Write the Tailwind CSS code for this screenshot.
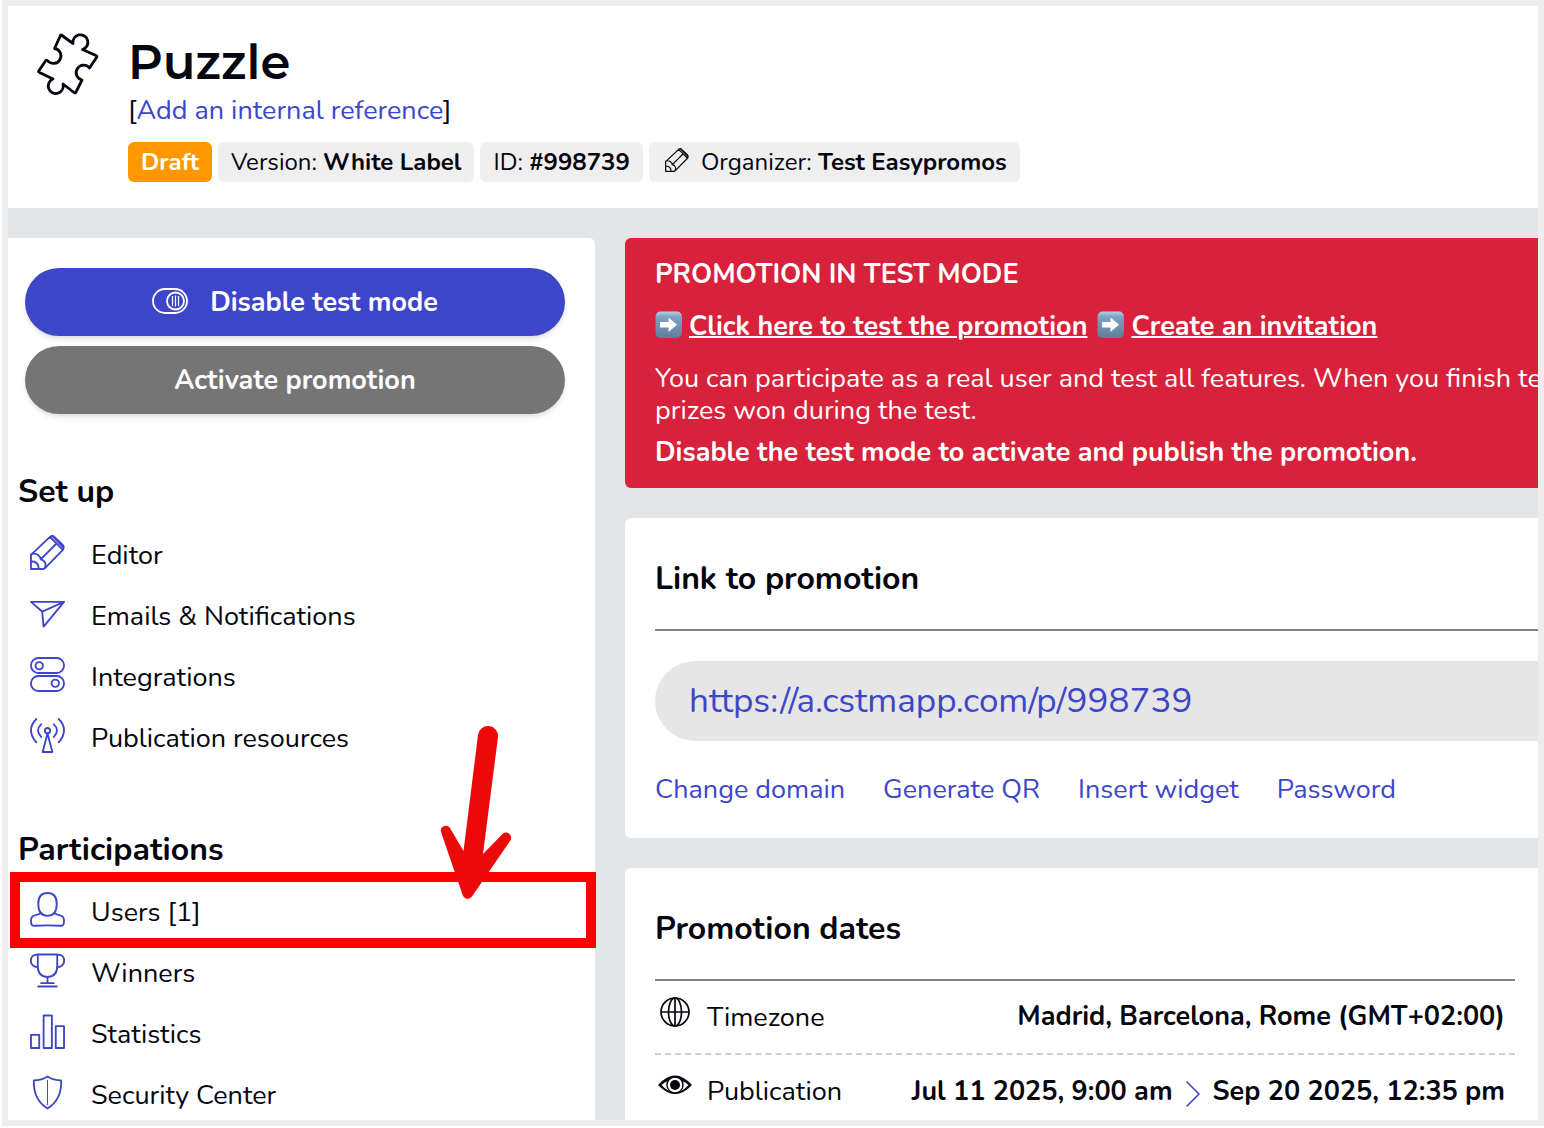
<!DOCTYPE html>
<html lang="en">
<head>
  <meta charset="UTF-8">
  <meta name="viewport" content="width=device-width, initial-scale=1.0">
  <title>Puzzle | Easypromos</title>
  <script src="https://cdn.jsdelivr.net/npm/@tailwindcss/browser@4"></script>
  <style>
    body { font-family: 'Nunito', 'Open Sans', sans-serif; }
    h1 { font-family: 'Montserrat', 'Nunito', sans-serif; }
  </style>
</head>
<body class="bg-white text-[#05060f] text-[27px] leading-8 pl-0.5 pb-0.5">
  <div class="h-[calc(100vh-2px)] border-6 border-[#ededed] overflow-hidden flex flex-col bg-[#e4e5e7]">

    <header class="shrink-0 bg-white flex gap-7 pl-7 pt-[26px] pb-[26px]">
      <svg class="size-16 shrink-0" viewBox="36 32 64 64" fill="none" stroke="currentColor" stroke-width="2.8" stroke-linejoin="round" stroke-linecap="round">
        <path d="M60.500 35.500 Q61 34.500 62 35.500 L73 43.500 A7.500 7.500 0 1 1 82.500 49.500 L96 55.500 Q97.500 56 96.500 57.500 L89.500 68 A7.500 7.500 0 1 0 82 80 L76 92 Q75.500 93.500 74 92.500 L63 84 A7.500 7.500 0 1 1 53 79 L39.500 72.500 Q38 72 39 70.500 L45.500 61 Q46 60 47.500 60.500 A7.500 7.500 0 1 0 54.500 48.500 Z"/>
      </svg>
      <div class="pt-0.5">
        <h1 class="text-5xl leading-14 font-semibold">Puzzle</h1>
        <p class="mt-[5px]">[<a href="#" class="text-[#3d46c9]">Add an internal reference</a>]</p>
        <div class="mt-[15px] flex gap-1.5 text-2xl leading-10">
          <span class="bg-[#ff9800] text-white font-bold rounded-md px-[13px]">Draft</span>
          <span class="bg-[#efefef] rounded-md px-[13px]">Version: <b class="font-bold">White Label</b></span>
          <span class="bg-[#efefef] rounded-md px-[13px]">ID: <b class="font-bold">#998739</b></span>
          <span class="bg-[#efefef] rounded-md pl-4 pr-[13px] flex gap-3">
            <svg class="size-6 mt-1.5" viewBox="0 0 36 36" fill="none" stroke="currentColor" stroke-width="1.8" stroke-linejoin="round" stroke-linecap="round">
              <path d="M1 35V20.500L20.500 2Q23 0 25 2L33.500 10Q35.500 12 34 15L15.500 34Q14.500 35 13 35ZM1 20C7 17 11 23 11 25C16 26 17 31 15 34M1 27Q9 27 9 35M11 25L27 9M20.500 2L33.500 15M23 1L34.500 13"/>
            </svg>
            <span>Organizer: <b class="font-bold">Test Easypromos</b></span>
          </span>
        </div>
      </div>
    </header>

    <div class="flex-1 min-h-0 flex gap-[30px] pt-[30px]">

      <aside class="w-[587px] shrink-0 bg-white rounded-tr-md">
        <div class="pt-[30px] pl-[17px] pr-[30px] space-y-2.5">
          <button class="w-full h-[68px] pt-0.5 rounded-full bg-[#3d46c9] text-white font-bold shadow-md flex items-center justify-center gap-[22px]">
            <svg class="w-9 h-[26px] mb-1" viewBox="0 0 36 26" fill="none" stroke="currentColor" stroke-width="1.8">
              <rect x="1" y="1" width="34" height="24" rx="12"/>
              <circle cx="23.500" cy="13" r="8.500"/>
              <path stroke-width="1.200" d="M20.500 8V18M23.500 7.500V18.500M26.500 8V18"/>
            </svg>
            Disable test mode
          </button>
          <button class="w-full h-[68px] pt-0.5 rounded-full bg-[#757575] text-white font-bold shadow-md">Activate promotion</button>
        </div>

        <h2 class="mt-[58px] ml-2.5 text-[32px] leading-10 font-bold">Set up</h2>
        <nav class="mt-[11px]">
          <a href="#" class="h-[61px] pl-[22px] flex items-center gap-[26px]">
            <svg class="size-[35px] mb-0.5 shrink-0 text-[#3d46c9]" viewBox="0 0 36 36" fill="none" stroke="currentColor" stroke-width="1.9" stroke-linejoin="round" stroke-linecap="round">
              <path d="M1 35V20.500L20.500 2Q23 0 25 2L33.500 10Q35.500 12 34 15L15.500 34Q14.500 35 13 35ZM1 20C7 17 11 23 11 25C16 26 17 31 15 34M1 27Q9 27 9 35M11 25L27 9M20.500 2L33.500 15M23 1L34.500 13"/>
            </svg>
            <span class="pt-1">Editor</span>
          </a>
          <a href="#" class="h-[61px] pl-[22px] flex items-center gap-[26px]">
            <svg class="size-[35px] mb-0.5 shrink-0 text-[#3d46c9]" viewBox="0 0 36 36" fill="none" stroke="currentColor" stroke-width="1.9" stroke-linejoin="round" stroke-linecap="round">
              <path d="M1 6H35L14 31.500L12.500 16ZM12.500 16L35 6"/>
            </svg>
            <span class="pt-1">Emails &amp; Notifications</span>
          </a>
          <a href="#" class="h-[61px] pl-[22px] flex items-center gap-[26px]">
            <svg class="size-[35px] mb-0.5 shrink-0 text-[#3d46c9]" viewBox="0 0 36 36" fill="none" stroke="currentColor" stroke-width="1.9">
              <rect x="1" y="1" width="34" height="15.500" rx="7.750"/>
              <circle cx="9.500" cy="9" r="3.800"/>
              <rect x="1" y="19.500" width="34" height="15.500" rx="7.750"/>
              <circle cx="26" cy="27" r="3.800"/>
            </svg>
            <span class="pt-1">Integrations</span>
          </a>
          <a href="#" class="h-[61px] pl-[22px] flex items-center gap-[26px]">
            <svg class="size-[35px] mb-0.5 shrink-0 text-[#3d46c9]" viewBox="0 0 36 36" fill="none" stroke="currentColor" stroke-width="1.9" stroke-linejoin="round" stroke-linecap="round">
              <path d="M6.500 1Q-4.500 12 6.500 25M29.500 1Q40.500 12 29.500 25M11.500 6.500Q5 12.500 11.500 19.500M24.500 6.500Q31 12.500 24.500 19.500M18 16L13 35H23Z"/>
              <circle cx="18" cy="13" r="2.700"/>
            </svg>
            <span class="pt-1">Publication resources</span>
          </a>
        </nav>

        <h2 class="mt-[63px] ml-2.5 text-[32px] leading-10 font-bold">Participations</h2>
        <nav class="mt-2.5">
          <div class="relative">
            <a href="#" class="h-[61px] pl-[22px] flex items-center gap-[26px]">
              <svg class="size-[35px] mb-0.5 shrink-0 text-[#3d46c9]" viewBox="0 0 36 36" fill="none" stroke="currentColor" stroke-width="1.9" stroke-linejoin="round" stroke-linecap="round">
                <path d="M18 1C24 1 27.500 4 27.500 12C27.500 20 24 24.500 18 24.500C12 24.500 8.500 20 8.500 12C8.500 4 12 1 18 1ZM10 22.500C5 24 1 24 1 29C1 34 2 35 5 34.700Q18 34 31 34.700C34 35 35 34 35 29C35 24 31 24 26 22.500"/>
              </svg>
              <span class="pt-1">Users [1]</span>
            </a>
            <!-- highlight box and pointer over the Users row -->
            <div class="absolute -top-2 -bottom-[7px] left-0.5 -right-px border-10 border-[#ff0000] pointer-events-none"></div>
            <svg class="absolute bottom-[41px] left-[432px] w-[72px] h-[176px] pointer-events-none" viewBox="440 724 72 176" fill="#eb0909">
              <path d="M478 735A10 10 0 0 1 498 737L483 854L502 834.500A5 5 0 0 1 510 841L472 896.500Q467 901.500 463 896L441 832A5 5 0 0 1 450 828L463.500 851Z"/>
            </svg>
          </div>
          <a href="#" class="h-[61px] pl-[22px] flex items-center gap-[26px]">
            <svg class="size-[35px] mb-0.5 shrink-0 text-[#3d46c9]" viewBox="0 0 36 36" fill="none" stroke="currentColor" stroke-width="1.9" stroke-linejoin="round" stroke-linecap="round">
              <path d="M8 1.500H28V13Q28 24.500 18 24.500Q8 24.500 8 13ZM8 2C-1.500 0 -1.500 15 8 14.500M28 2C37.500 0 37.500 15 28 14.500M18 24.500V31M11.500 31H24.500M8.500 34.500H27.500"/>
            </svg>
            <span class="pt-1">Winners</span>
          </a>
          <a href="#" class="h-[61px] pl-[22px] flex items-center gap-[26px]">
            <svg class="size-[35px] mb-0.5 shrink-0 text-[#3d46c9]" viewBox="0 0 36 36" fill="none" stroke="currentColor" stroke-width="1.9" stroke-linejoin="round">
              <path d="M1 21.500H9.500V35H1ZM14 1.500H22.500V35H14ZM26.500 12.500H35V35H26.500Z"/>
            </svg>
            <span class="pt-1">Statistics</span>
          </a>
          <a href="#" class="h-[61px] pl-[22px] flex items-center gap-[26px]">
            <svg class="size-[35px] mb-0.5 shrink-0 text-[#3d46c9]" viewBox="0 0 36 36" fill="none" stroke="currentColor" stroke-width="1.9" stroke-linejoin="round">
              <path d="M18 1.500Q24 5.500 32 5.500Q33 25 18 34.500Q3 25 4 5.500Q12 5.500 18 1.500Z"/>
              <path stroke-width="1" d="M18 5V31"/>
            </svg>
            <span class="pt-1">Security Center</span>
          </a>
        </nav>
      </aside>

      <main class="flex-1 min-w-0 flex flex-col gap-[30px]">

        <section class="shrink-0 bg-[#d8213b] text-white rounded-l-md pl-[30px] pt-[21px] pb-[19px] whitespace-nowrap overflow-hidden">
          <h2 class="font-bold">PROMOTION IN TEST MODE</h2>
          <p class="mt-5 font-bold flex items-center">
            <svg class="size-7 mb-1 mr-1.5" viewBox="0 0 28 28">
              <defs>
                <linearGradient id="key" x1="0" y1="0" x2="0" y2="1">
                  <stop offset="0" stop-color="#b9cfe2"/>
                  <stop offset="0.200" stop-color="#7fa3c4"/>
                  <stop offset="1" stop-color="#5f7d98"/>
                </linearGradient>
              </defs>
              <rect x="0.500" y="0.500" width="26.500" height="26.500" rx="5" fill="url(#key)"/>
              <path fill="#fff" d="M5 11H13.500V6.500L22 13.700L13.500 21V16.500H5Z"/>
            </svg>
            <a href="#" class="underline decoration-2">Click here to test the promotion</a>
            <svg class="size-7 mb-1 ml-2.5 mr-1.5" viewBox="0 0 28 28">
              <rect x="0.500" y="0.500" width="26.500" height="26.500" rx="5" fill="url(#key)"/>
              <path fill="#fff" d="M5 11H13.500V6.500L22 13.700L13.500 21V16.500H5Z"/>
            </svg>
            <a href="#" class="underline decoration-2">Create an invitation</a>
          </p>
          <p class="mt-5">You can participate as a real user and test all features. When you finish testing<br>prizes won during the test.</p>
          <p class="mt-2.5 font-bold">Disable the test mode to activate and publish the promotion.</p>
        </section>

        <section class="shrink-0 bg-white rounded-l-md pl-[30px] pt-[41px] pb-8">
          <h2 class="text-[32px] leading-10 font-bold pb-[30px] border-b-2 border-[#83828a]">Link to promotion</h2>
          <div class="mt-[30px] h-20 rounded-l-full bg-[#e6e6e6] pl-[34px] flex items-center">
            <a href="#" class="text-[35px] text-[#3d46c9]">https://a.cstmapp.com/p/998739</a>
          </div>
          <nav class="mt-[33px] flex gap-[38px] text-[#3d46c9]">
            <a href="#">Change domain</a>
            <a href="#">Generate QR</a>
            <a href="#">Insert widget</a>
            <a href="#">Password</a>
          </nav>
        </section>

        <section class="shrink-0 bg-white rounded-tl-md pl-[30px] pr-[23px] pt-[41px] pb-8">
          <h2 class="text-[32px] leading-10 font-bold pb-[30px] border-b-2 border-[#83828a]">Promotion dates</h2>
          <div class="h-[74px] pr-2.5 flex items-center justify-between border-b-2 border-dashed border-[#cfcfcf]">
            <div class="flex items-center gap-[15px] pl-[3px] pt-0.5">
              <svg class="size-[34px] mb-3" viewBox="0 0 34 34" fill="none" stroke="currentColor" stroke-width="1.7">
                <circle cx="17" cy="17" r="14"/>
                <ellipse cx="17" cy="17" rx="6.500" ry="14"/>
                <path d="M17 3V31M3 17H31"/>
              </svg>
              Timezone
            </div>
            <b class="font-bold">Madrid, Barcelona, Rome (GMT+02:00)</b>
          </div>
          <div class="h-[74px] pr-2.5 flex items-center justify-between">
            <div class="flex items-center gap-[15px] pl-[3px]">
              <svg class="size-[34px] mb-3" viewBox="0 0 34 34">
                <path fill="currentColor" d="M0 16Q17 -3 34 16Q17 34 0 16Z"/>
                <path fill="#fff" d="M3.500 16Q17 4.500 30.500 16Q17 31 3.500 16Z"/>
                <circle cx="17" cy="16" r="8" fill="#fff" stroke="currentColor" stroke-width="1.400"/>
                <circle cx="17" cy="16" r="5" fill="currentColor"/>
              </svg>
              Publication
            </div>
            <div class="flex items-center gap-3 font-bold">
              Jul 11 2025, 9:00 am
              <svg class="w-4 h-7 mt-1" viewBox="0 0 16 28" fill="none" stroke="#3d46c9" stroke-width="1.6" stroke-linecap="round" stroke-linejoin="round">
                <path d="M2 2L14 14L2 26"/>
              </svg>
              Sep 20 2025, 12:35 pm
            </div>
          </div>
        </section>

      </main>
    </div>
  </div>
</body>
</html>
